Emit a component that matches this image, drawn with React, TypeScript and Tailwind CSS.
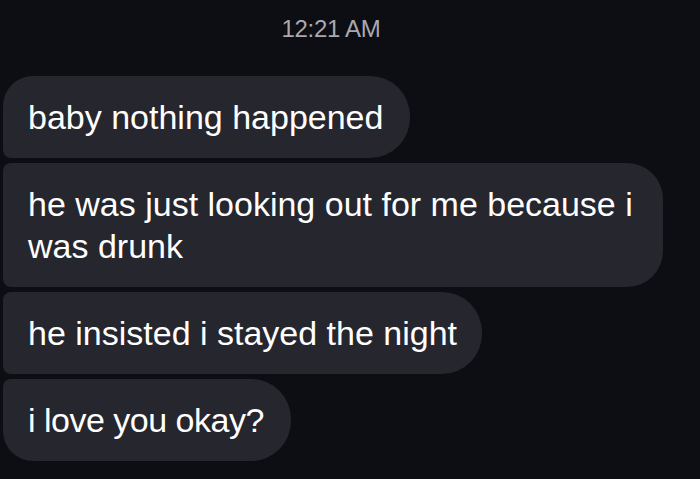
import React from "react";

const font = { fontFamily: '"Liberation Sans", Arial, sans-serif' };

export default function App() {
  return (
    <div
      className="w-[700px] h-[479px] overflow-hidden bg-[#0d0d14] flex flex-col"
      style={font}
    >
      <div className="flex justify-center pt-[15px] pr-[38px] text-[24px] leading-[28px] tracking-[-0.3px] text-[#a9a9b0]">
        12:21 AM
      </div>
      <div className="flex flex-col items-start gap-[5px] pl-[3px] mt-[33px] text-white text-[34px] leading-[42px]">
        <div className="bg-[#26262e] pl-[25px] pr-[27px] py-[20px] rounded-tl-[30px] rounded-bl-[8px] rounded-r-[40px]">
          baby nothing happened
        </div>
        <div className="bg-[#26262e] max-w-[660px] pl-[25px] pr-[27px] py-[20px] rounded-l-[8px] rounded-r-[36px]">
          he was just looking out for me because i was drunk
        </div>
        <div className="bg-[#26262e] pl-[25px] pr-[25px] py-[20px] rounded-l-[8px] rounded-r-[40px]">
          he insisted i stayed the night
        </div>
        <div className="bg-[#26262e] pl-[25px] pr-[27px] py-[20px] tracking-[-0.5px] rounded-tl-[8px] rounded-bl-[30px] rounded-r-[40px]">
          i love you okay?
        </div>
      </div>
    </div>
  );
}
